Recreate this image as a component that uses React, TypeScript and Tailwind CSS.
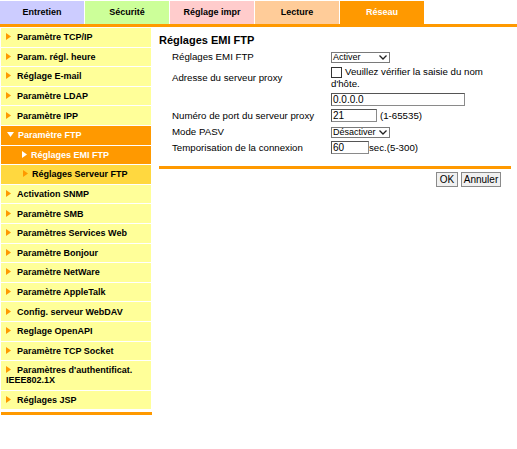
import React from 'react'

const TABS = [
  { label: 'Entretien', bg: 'bg-[#ccccff]', text: 'text-black' },
  { label: 'Sécurité', bg: 'bg-[#ccff99]', text: 'text-black' },
  { label: 'Réglage impr', bg: 'bg-[#ffcccc]', text: 'text-black' },
  { label: 'Lecture', bg: 'bg-[#ffcc99]', text: 'text-black' },
  { label: 'Réseau', bg: 'bg-[#ff9900]', text: 'text-white' },
]

type Kind = 'item' | 'open' | 'subActive' | 'sub'

const MENU: { label: string; kind: Kind }[] = [
  { label: 'Paramètre TCP/IP', kind: 'item' },
  { label: 'Param. régl. heure', kind: 'item' },
  { label: 'Réglage E-mail', kind: 'item' },
  { label: 'Paramètre LDAP', kind: 'item' },
  { label: 'Paramètre IPP', kind: 'item' },
  { label: 'Paramètre FTP', kind: 'open' },
  { label: 'Réglages EMI FTP', kind: 'subActive' },
  { label: 'Réglages Serveur FTP', kind: 'sub' },
  { label: 'Activation SNMP', kind: 'item' },
  { label: 'Paramètre SMB', kind: 'item' },
  { label: 'Paramètres Services Web', kind: 'item' },
  { label: 'Paramètre Bonjour', kind: 'item' },
  { label: 'Paramètre NetWare', kind: 'item' },
  { label: 'Paramètre AppleTalk', kind: 'item' },
  { label: 'Config. serveur WebDAV', kind: 'item' },
  { label: 'Reglage OpenAPI', kind: 'item' },
  { label: 'Paramètre TCP Socket', kind: 'item' },
  { label: "Paramètres d'authentificat. IEEE802.1X", kind: 'item' },
  { label: 'Réglages JSP', kind: 'item' },
]

function Arrow({ color, down }: { color: string; down?: boolean }) {
  return down ? (
    <svg width="7" height="5" viewBox="0 0 7 5" className="inline-block align-[1px]">
      <polygon points="0,0 7,0 3.5,5" fill={color} />
    </svg>
  ) : (
    <svg width="5" height="7" viewBox="0 0 5 7" className="inline-block align-[0px]">
      <polygon points="0,0 5,3.5 0,7" fill={color} />
    </svg>
  )
}

function MenuItem({ label, kind }: { label: string; kind: Kind }) {
  if (kind === 'open')
    return (
      <div className="bg-[#ff9900] text-white py-[4.3px] pl-[6px] border-b border-white">
        <Arrow color="#ffffff" down />
        <span className="ml-[4px]">{label}</span>
      </div>
    )
  if (kind === 'subActive')
    return (
      <div className="bg-[#ff9900] text-white py-[4.3px] pl-[21px] border-b border-white">
        <Arrow color="#ffffff" />
        <span className="ml-[4px]">{label}</span>
      </div>
    )
  if (kind === 'sub')
    return (
      <div className="bg-[#ffd83f] text-black py-[4.3px] pl-[22px] border-b border-white">
        <Arrow color="#ff9900" />
        <span className="ml-[4px]">{label}</span>
      </div>
    )
  return (
    <div className="bg-[#ffff99] text-black py-[4.3px] pl-[5px] border-b border-white">
      <Arrow color="#ff9900" />
      <span className="ml-[6px]">{label}</span>
    </div>
  )
}

function Select({ value }: { value: string }) {
  return (
    <div className="w-[59px] h-[11px] border border-[#7a7a7a] bg-white flex items-center justify-between pl-px pr-[2px] text-[9px] leading-none whitespace-nowrap">
      <span>{value}</span>
      <svg width="8" height="5" viewBox="0 0 8 5" className="shrink-0">
        <polyline points="0.5,0.5 4,4 7.5,0.5" fill="none" stroke="#222" strokeWidth="1.3" />
      </svg>
    </div>
  )
}

function Input({ value, w }: { value: string; w: string }) {
  return (
    <div className={`${w} h-[13px] border border-[#8a8a8a] border-t-[#555] border-l-[#555] bg-white pl-px text-[10px] leading-[11px]`}>
      {value}
    </div>
  )
}

function Row({ label, children, className }: { label: string; children: React.ReactNode; className: string }) {
  return (
    <div className={`flex items-center ${className}`}>
      <div className="w-[172px] shrink-0 pl-[13px] whitespace-nowrap">{label}</div>
      <div className="flex items-center">{children}</div>
    </div>
  )
}

export default function App() {
  return (
    <div className="w-[517px] h-[449px] bg-white text-black font-['Liberation_Sans',Arial,sans-serif] overflow-hidden">
      {/* Tabs */}
      <div className="flex gap-px pt-px">
        {TABS.map(t => (
          <div
            key={t.label}
            className={`w-[84px] h-[23px] flex items-center justify-center text-[9px] font-bold ${t.bg} ${t.text}`}
          >
            {t.label}
          </div>
        ))}
      </div>
      <div className="h-[3px] bg-[#ff9900]" />

      <div className="flex pt-px">
        {/* Side menu */}
        <div className="w-[152px] pl-px">
          <div className="w-[150px] text-[9px] font-bold leading-[10px]">
            {MENU.map(m => (
              <MenuItem key={m.label} label={m.label} kind={m.kind} />
            ))}
          </div>
          <div className="mt-[2px] h-[3px] bg-[#ff9900]" />
        </div>

        {/* Content */}
        <div className="ml-[7px] w-[352px] text-[9.7px] leading-[12px]">
          <div className="mt-[5px] h-[14px] text-[11px] leading-[14px] font-bold">Réglages EMI FTP</div>

          <Row label="Réglages EMI FTP" className="mt-[3px] h-[14px]">
            <Select value="Activer" />
          </Row>

          <Row label="Adresse du serveur proxy" className="mt-[2px] h-[24px]">
            <div className="w-[180px]">
              <div className="flex items-center">
                <div className="w-[11px] h-[11px] border border-[#333] bg-white mr-[3px]" />
                <span>Veuillez vérifier la saisie du nom</span>
              </div>
              <div>d'hôte.</div>
            </div>
          </Row>

          <div className="mt-[3px] pl-[172px]">
            <Input value="0.0.0.0" w="w-[134px]" />
          </div>

          <Row label="Numéro de port du serveur proxy" className="mt-[3px] h-[13px]">
            <Input value="21" w="w-[46px]" />
            <span className="ml-[3px]">(1-65535)</span>
          </Row>

          <Row label="Mode PASV" className="mt-[4px] h-[12px]">
            <Select value="Désactiver" />
          </Row>

          <Row label="Temporisation de la connexion" className="mt-[3px] h-[13px]">
            <Input value="60" w="w-[38px]" />
            <span>sec.(5-300)</span>
          </Row>

          <div className="mt-[12px] h-[3px] bg-[#ff9900]" />

          <div className="mt-[3px] pr-[10px] flex justify-end gap-[3px]">
            <button className="w-[22px] h-[15px] bg-[#f0f0f0] border border-[#8a8a8a] text-[10px] leading-none">OK</button>
            <button className="w-[40px] h-[15px] bg-[#f0f0f0] border border-[#8a8a8a] text-[10px] leading-none">Annuler</button>
          </div>
        </div>
      </div>
    </div>
  )
}
